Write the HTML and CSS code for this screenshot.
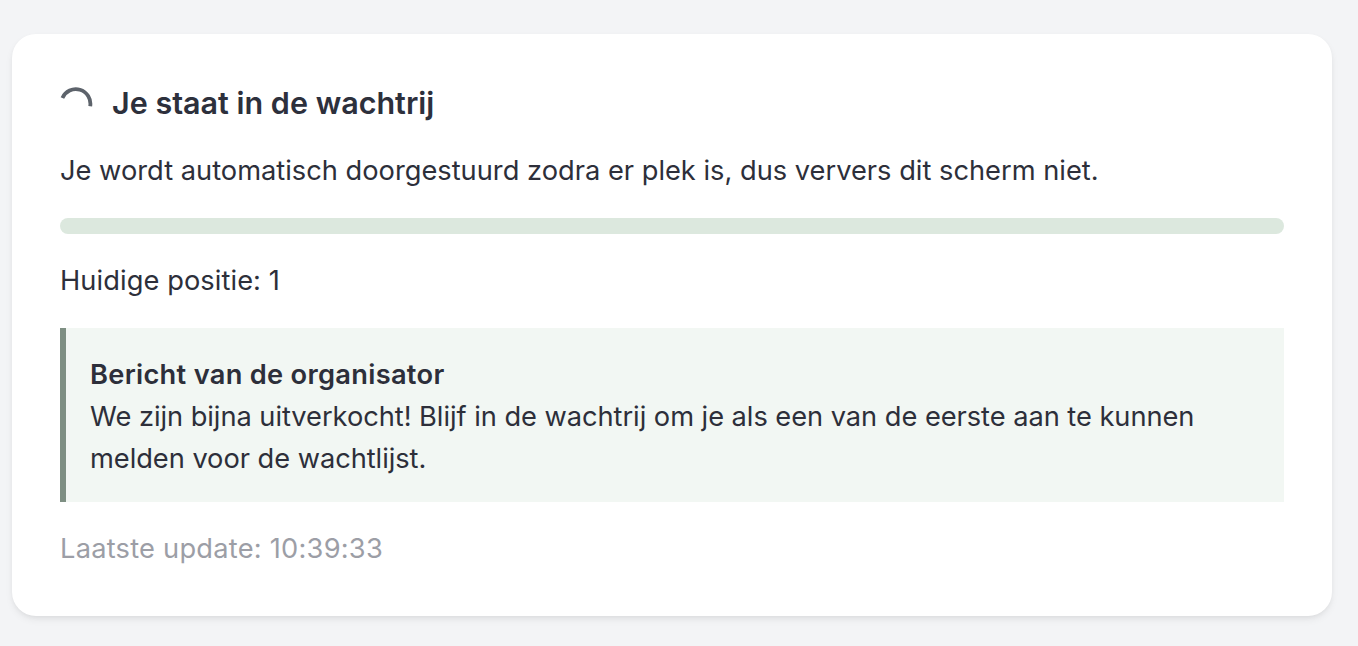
FILE: index.html
```html
<!DOCTYPE html>
<html lang="nl">
<head>
<meta charset="utf-8">
<title>Wachtrij</title>
<link rel="stylesheet" href="styles.css">
</head>
<body>
<main class="card">
  <div class="heading">
    <svg class="spinner" width="34" height="34" viewBox="0 0 34 34" fill="none"><path d="M2.4 11A14.6 14.6 0 0 1 30.2 19.2" stroke="#5d636b" stroke-width="3.8"/></svg>
    <h1 class="title">Je staat in de wachtrij</h1>
  </div>
  <p class="lead">Je wordt automatisch doorgestuurd zodra er plek is, dus ververs dit scherm niet.</p>
  <div class="progress"></div>
  <p class="position">Huidige positie: 1</p>
  <div class="notice">
    <strong class="notice-title">Bericht van de organisator</strong>
    <p class="notice-body">We zijn bijna uitverkocht! Blijf in de wachtrij om je als een van de eerste aan te kunnen melden voor de wachtlijst.</p>
  </div>
  <p class="updated">Laatste update: 10:39:33</p>
</main>
</body>
</html>
```
FILE: styles.css
```css
* { box-sizing: border-box; }
html, body { margin: 0; height: 100%; overflow: hidden; }
body {
  background: #f3f4f6;
  padding: 34px 26px 0 12px;
  font-family: Inter, "Liberation Sans", sans-serif;
  color: #2d2f3a;
  font-size: 27.25px;
  line-height: 42px;
}
.card {
  background: #fff;
  border-radius: 24px;
  padding: 48px 48px 46px;
  box-shadow: 0 4px 8px -1px rgba(0,0,0,.07), 0 2px 5px -1px rgba(0,0,0,.05);
}
.heading { display: flex; align-items: center; gap: 18px; height: 42px; }
.spinner { flex: none; margin-top: 2px; }
.title { margin: 0; font-size: 30.5px; font-weight: 600; line-height: 42px; color: #2d303c; }
.lead { margin: 26px 0 0; }
.progress { height: 16px; margin-top: 26px; background: #dce8de; border-radius: 8px; }
.position { margin: 26px 0 0; letter-spacing: .08px; }
.notice {
  margin-top: 26px;
  padding: 26px 24px 22px 24px;
  background: #f2f7f3;
  border-left: 6px solid #7e8f83;
}
.notice-title { display: block; font-weight: 600; letter-spacing: .29px; }
.notice-body { margin: 0; letter-spacing: -.045px; }
.updated { margin: 26px 0 0; color: #9c9ea6; letter-spacing: .23px; }
```
